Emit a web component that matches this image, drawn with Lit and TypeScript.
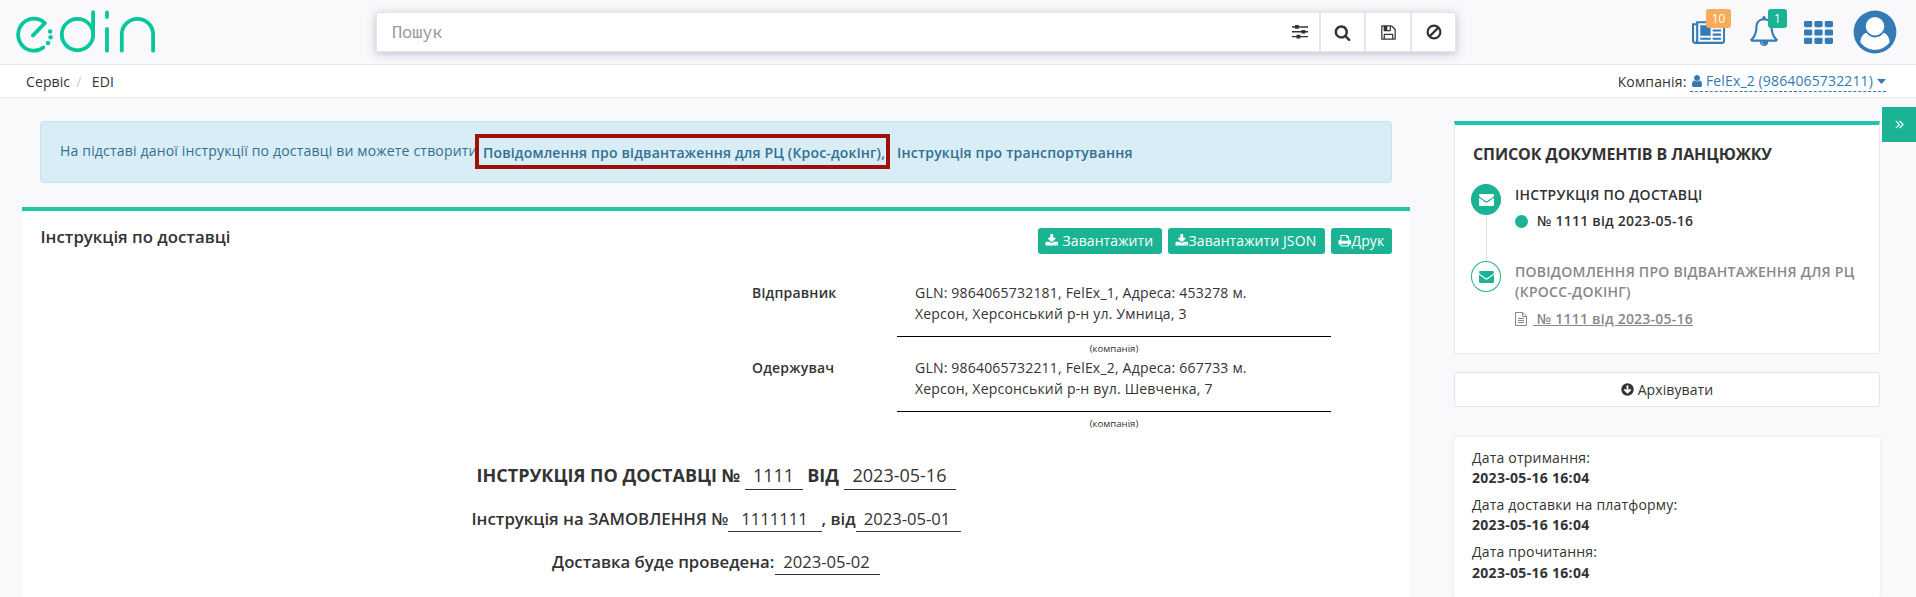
import { LitElement, html, css, svg } from "lit";
import { customElement } from "lit/decorators.js";

const P = {
  search: "M1216 832q0-185-131.5-316.5t-316.5-131.5-316.5 131.5-131.5 316.5 131.5 316.5 316.5 131.5 316.5-131.5 131.5-316.5zm512 832q0 52-38 90t-90 38q-54 0-90-38l-343-342q-179 124-399 124-143 0-273.5-55.5t-225-150-150-225-55.5-273.5 55.5-273.5 150-225 225-150 273.5-55.5 273.5 55.5 225 150 150 225 55.5 273.5q0 220-124 399l343 343q37 37 37 90z",
  bell: "M912 1696q0-16-16-16-59 0-101.5-42.5t-42.5-101.5q0-16-16-16t-16 16q0 73 51.5 124.5t124.5 51.5q16 0 16-16zm-666-288h1300q-266-300-266-832 0-51-24-105t-69-103-121.5-80.5-169.5-31.5-169.5 31.5-121.5 80.5-69 103-24 105q0 532-266 832zm1482 0q0 52-38 90t-90 38h-448q0 106-75 181t-181 75-181-75-75-181h-448q-52 0-90-38t-38-90q50-42 91-88t85-119.5 74.5-158.5 50-206 19.5-260q0-152 117-282.5t307-158.5q-8-19-8-39 0-40 28-68t68-28 68 28 28 68q0 20-8 39 190 28 307 158.5t117 282.5q0 139 19.5 260t50 206 74.5 158.5 85 119.5 91 88z",
  news: "M1024 1024h-384v-384h384v384zm128 256v128h-640v-128h640zm0-768v640h-640v-640h640zm640 768v128h-512v-128h512zm0-256v128h-512v-128h512zm0-256v128h-512v-128h512zm0-256v128h-512v-128h512zm-1536 960v-960h-128v960q0 26 19 45t45 19 45-19 19-45zm1664 0v-1088h-1536v1088q0 33-11 64h1483q26 0 45-19t19-45zm128-1216v1216q0 80-56 136t-136 56h-1664q-80 0-136-56t-56-136v-1088h256v-128h1792z",
  download: "M1344 1344q0-26-19-45t-45-19-45 19-19 45 19 45 45 19 45-19 19-45zm256 0q0-26-19-45t-45-19-45 19-19 45 19 45 45 19 45-19 19-45zm128-224v320q0 40-28 68t-68 28h-1472q-40 0-68-28t-28-68v-320q0-40 28-68t68-28h465l135 136q58 56 136 56t136-56l136-136h464q40 0 68 28t28 68zm-325-569q17 41-14 70l-448 448q-18 19-45 19t-45-19l-448-448q-31-29-14-70 17-39 59-39h256v-448q0-26 19-45t45-19h256q26 0 45 19t19 45v448h256q42 0 59 39z",
  print: "M448 1536h896v-256h-896v256zm0-640h896v-384h-160q-40 0-68-28t-28-68v-160h-640v640zm1152 64q0-26-19-45t-45-19-45 19-19 45 19 45 45 19 45-19 19-45zm128 0v416q0 13-9.5 22.5t-22.5 9.5h-224v160q0 40-28 68t-68 28h-960q-40 0-68-28t-28-68v-160h-224q-13 0-22.5-9.5t-9.5-22.5v-416q0-79 56.5-135.5t135.5-56.5h64v-544q0-40 28-68t68-28h672q40 0 88 20t76 48l152 152q28 28 48 76t20 88v256h64q79 0 135.5 56.5t56.5 135.5z",
  user: "M1536 1399q0 109-62.5 187t-150.5 78h-854q-88 0-150.5-78t-62.5-187q0-85 8.5-160.5t31.5-152 58.5-131 94-89 134.5-34.5q131 128 313 128t313-128q76 0 134.5 34.5t94 89 58.5 131 31.5 152 8.5 160.5zm-256-887q0 159-112.5 271.5t-271.5 112.5-271.5-112.5-112.5-271.5 112.5-271.5 271.5-112.5 271.5 112.5 112.5 271.5z",
  floppy: "M512 1536h768v-384h-768v384zm896 0h128v-896q0-14-10-38.5t-20-34.5l-281-281q-10-10-34-20t-39-10v416q0 40-28 68t-68 28h-576q-40 0-68-28t-28-68v-416h-128v1280h128v-416q0-40 28-68t68-28h832q40 0 68 28t28 68v416zm-384-928v-320q0-13-9.5-22.5t-22.5-9.5h-192q-13 0-22.5 9.5t-9.5 22.5v320q0 13 9.5 22.5t22.5 9.5h192q13 0 22.5-9.5t9.5-22.5zm640 32v928q0 40-28 68t-68 28h-1344q-40 0-68-28t-28-68v-1344q0-40 28-68t68-28h928q40 0 88 20t76 48l280 280q28 28 48 76t20 88z",
};

const fa = (d: string, size: number, w = 1792) =>
  html`<svg width=${(size * w) / 1792} height=${size} viewBox="0 0 ${w} 1792" fill="currentColor"><path d=${d} /></svg>`;

const logo = html`<svg width="140" height="46" viewBox="0 0 140 46" fill="none" stroke="#06c79c" stroke-width="3.8" stroke-linecap="round" stroke-linejoin="round">
  <path d="M17 27.400 28.800 15.200A15.700 16 0 1 0 27.300 39.500" />
  <circle cx="61.5" cy="26.600" r="15.7" />
  <path d="M77.100 4.200V26.600M91 4.400V9M91 20.800V42.700M105.800 42.700V26.500a15.600 15.600 0 0 1 31.300 0V42.700" />
  <g fill="#06c79c" stroke="none"><circle cx="34.100" cy="23.500" r="2.200" /><circle cx="34.600" cy="29.300" r="2.200" /><circle cx="32" cy="35" r="2.200" /></g>
</svg>`;

const sliders = html`<svg width="16" height="14" viewBox="0 0 16 14" fill="currentColor">
  <path d="M0 1.300h16v1.400H0zM0 6.100h16v1.400H0zM0 10.900h16v1.400H0z" />
  <path d="M3 0h3.800v3.700H3zM9.500 4.900h3.800v3.700H9.500zM4.500 9.800h3.800v3.700H4.500z" />
</svg>`;

const ban = html`<svg width="16" height="16" viewBox="0 0 16 16" fill="none" stroke="currentColor" stroke-width="2.200">
  <circle cx="8" cy="8" r="6.400" /><path d="M3.600 12.400 12.400 3.600" />
</svg>`;

const grid = html`<svg width="29" height="23" viewBox="0 0 29 23" fill="currentColor">
  ${[0, 8.4, 16.8].map((y) => [0, 10.4, 20.8].map((x) => svg`<rect x=${x} y=${y} width="8.2" height="6.200" rx="1.400" />`))}
</svg>`;

const avatar = html`<svg width="44" height="44" viewBox="0 0 44 44">
  <circle cx="22" cy="22" r="21.400" fill="#337ab7" />
  <path d="M13.300 22.800Q17 27.400 22 27.400Q27 27.400 30.700 22.800C34 23.500 36.600 28 36.600 32.500C33 37 28 39.800 22 39.800S11 37 7.400 32.500C7.400 28 10 23.500 13.300 22.800z" fill="#fff" />
  <circle cx="22" cy="16.300" r="9.200" fill="#fff" />
</svg>`;

const caret = html`<svg width="9" height="5" viewBox="0 0 9 5" fill="currentColor"><path d="M0 0h9L4.500 5z" /></svg>`;

const mail = html`<svg width="15" height="12" viewBox="0 0 15 12" fill="currentColor">
  <path d="M1.300 0h12.400Q15 0 15 1.300 15 2.400 13.500 3.400L8.600 6.800Q7.500 7.500 6.400 6.800L1.500 3.400Q0 2.400 0 1.300 0 0 1.300 0z" />
  <path d="M0 3.700 6 7.900Q7.500 8.900 9 7.900L15 3.700V10.700Q15 12 13.700 12H1.300Q0 12 0 10.700z" />
</svg>`;

const doc = html`<svg width="12" height="14" viewBox="0 0 12 14" fill="none" stroke="currentColor">
  <path d="M.5.5h7.200l3.800 3.800v9.200H.5zM7.500.5v4h4M3 6.500h6M3 8.500h6M3 10.500h6" />
</svg>`;

const archive = html`<svg width="13" height="13" viewBox="0 0 13 13">
  <circle cx="6.500" cy="6.500" r="6.200" fill="currentColor" />
  <path d="M6.500 2.600v6.600M3.300 6.300l3.200 3.200 3.200-3.200" fill="none" stroke="#fff" stroke-width="1.900" />
</svg>`;

const chevrons = html`<svg width="9" height="9" viewBox="0 0 9 9" fill="none" stroke="currentColor" stroke-width="1.200">
  <path d="M.8.8l3.600 3.700L.8 8.200M4.500.8l3.600 3.700-3.600 3.700" />
</svg>`;

const parties = [
  { role: "Відправник", lines: ["GLN: 9864065732181, FelEx_1, Адреса: 453278 м.", "Херсон, Херсонський р-н ул. Умница, 3"] },
  { role: "Одержувач", lines: ["GLN: 9864065732211, FelEx_2, Адреса: 667733 м.", "Херсон, Херсонський р-н вул. Шевченка, 7"] },
];

const dates = [
  ["Дата отримання:", "2023-05-16 16:04"],
  ["Дата доставки на платформу:", "2023-05-16 16:04"],
  ["Дата прочитання:", "2023-05-16 16:04"],
];

@customElement("app-root")
export class AppRoot extends LitElement {
  static styles = css`
    :host { display: block; height: 597px; overflow: hidden; background: #f9f9fb; color: #333;
      font: 14px/20px "Open Sans", "Noto Sans", sans-serif; }
    * { box-sizing: border-box; }
    svg { display: block; flex: none; }
    .top { height: 65px; border-bottom: 1px solid #e4e7ec; display: flex; align-items: flex-start; }
    .logo { margin: 8px 0 0 16px; width: 360px; }
    .search { margin-top: 12px; width: 1080px; height: 40px; display: flex; background: #fff; border: 1px solid #e5e6e9;
      box-shadow: 0 2px 9px rgba(60, 65, 110, .3); }
    .field { flex: 1; display: flex; align-items: center; justify-content: space-between; padding: 0 11px 0 15px; }
    .hint { font: 17px/36px "Noto Sans Mono", "DejaVu Sans Mono", monospace; color: #999; letter-spacing: -.1px; }
    .tool { width: 45.500px; border-left: 2px solid #e5e6e7; display: flex; align-items: center; justify-content: center; padding-left: 1px; }
    .nav { flex: 1; display: flex; color: #337ab7; height: 64px; }
    .news { margin: 17px 0 0 236px; width: 34px; position: relative; }
    .bell { margin: 16px 0 0 23px; width: 29px; position: relative; }
    .grid { margin: 21px 0 0 26px; }
    .avatar { margin: 10px 0 0 20px; }
    .badge { position: absolute; height: 19px; border-radius: 3px; color: #fff; font-size: 12px; line-height: 19px; text-align: center; }
    .orange { background: #f8ac59; left: 14px; top: -8px; width: 25px; }
    .green { background: #1ab394; left: 19px; top: -7px; width: 19px; }
    .crumbs { height: 33px; border-bottom: 1px solid #e4e7ec; background: #fff; padding: 0 30px 0 26px; display: flex; justify-content: space-between; line-height: 33px; letter-spacing: .1px; }
    .sep { color: #ccc; padding: 0 10.500px 0 6px; letter-spacing: 0; }
    .company { display: flex; align-items: center; gap: 3.500px; letter-spacing: .14px; }
    .pick { display: flex; align-items: center; gap: 4px; color: #337ab7; line-height: 20px; height: 21px; margin-top: 1px; border-bottom: 1px dashed #337ab7; }
    .body { display: flex; align-items: flex-start; }
    .main { width: 1388px; margin: 23px 0 0 22px; }
    .alert { margin: 0 18px; height: 62px; border: 1px solid #bce8f1; border-radius: 4px; background: #d9edf7; color: #31708f;
      padding: 13px 19px; display: flex; }
    .lead { line-height: 31px; width: 415px; white-space: nowrap; letter-spacing: .18px; flex: none; }
    .link { font-weight: 600; line-height: 36px; white-space: nowrap; height: 35px; letter-spacing: .2px; }
    .marked { width: 415px; border: 4px solid #9c120b; margin: -1px 7px 0 0; padding-left: 4px; line-height: 29px; letter-spacing: .17px; flex: none; }
    .card { margin-top: 24px; height: 420px; border-top: 4px solid #1fc5a6; background: #fff; }
    .head { display: flex; justify-content: space-between; padding: 17px 18px 0 18.500px; height: 61px; }
    .title { font-size: 16.800px; font-weight: 600; line-height: 18px; }
    .btns { display: flex; gap: 6px; }
    .btn { height: 26px; border-radius: 3px; background: #1ab394; color: #fff; display: flex; align-items: center; padding-left: 7px; white-space: nowrap; letter-spacing: .1px; }
    .b1 { width: 124px; gap: 4px; } .b2 { width: 157px; } .b3 { width: 61px; }
    .party { display: grid; grid-template-columns: 145px 434px; padding-left: 730px; height: 75px; line-height: 21px; padding-top: 10px; }
    .role { font-weight: 600; letter-spacing: .2px; }
    .who { height: 55px; border-bottom: 1px solid #000; padding-left: 18px; white-space: nowrap; letter-spacing: .2px; }
    .note { grid-column: 2; text-align: center; font-size: 9.600px; line-height: 22px; height: 19px; margin-top: 1px; }
    .row { display: flex; align-items: flex-start; white-space: pre; font-weight: 600; }
    .r1 { font-size: 18px; font-weight: 700; padding-left: 454.500px; margin-top: 40px; height: 43px; line-height: 27px; }
    .r2 { font-size: 16.800px; padding-left: 449.500px; height: 43px; line-height: 27px; }
    .r3 { font-size: 16.750px; padding-left: 530px; line-height: 27px; }
    .val { font-weight: 400; border-bottom: 1px solid #333; text-align: center; height: 28px; }
    .r2 .val, .r3 .val { font-size: 16.600px; height: 27px; }
    .r3 .val, .r2 .val:last-child { padding-right: 2px; }
    .side { width: 426px; margin: 23px 0 0 44px; }
    .chain { height: 233px; background: #fff; border: 1px solid #e7eaec; border-top: 4px solid #1fc5a6; padding-left: 16px; }
    .cap { font-size: 16px; font-weight: 700; line-height: 22px; padding: 18px 0 0 2px; height: 59px; letter-spacing: -.09px; }
    .step { display: flex; gap: 14px; font-weight: 600; height: 77px; letter-spacing: .25px; white-space: nowrap; }
    .text { padding-top: 1px; }
    .rail { width: 30px; display: flex; flex-direction: column; align-items: center; flex: none; }
    .dot { width: 30px; height: 31px; border-radius: 50%; border: 1px solid #1ab394; color: #1ab394; display: flex; align-items: center; justify-content: center; flex: none; }
    .on { background: #1ab394; color: #fff; }
    .line { width: 1px; flex: 1; background: #e0e0e0; }
    .doc { display: flex; align-items: center; height: 20px; margin-top: 6px; white-space: pre; letter-spacing: .23px; }
    .muted .doc { margin-top: 7px; }
    .mark { width: 13px; height: 13px; border-radius: 50%; background: #1ab394; margin-right: 9px; }
    .muted { color: #888; }
    .ref { margin-left: 6px; text-decoration: underline; }
    .arch { margin-top: 18px; height: 35px; background: #fff; border: 1px solid #e4e4ee; border-radius: 3px; display: flex; align-items: center; justify-content: center; gap: 4px; letter-spacing: .1px; }
    .dates { margin-top: 30px; height: 161px; background: #fff; border-radius: 4px; box-shadow: 0 0 4px rgba(0, 0, 0, .08); padding: 11px 18px; letter-spacing: .2px; }
    .pair { height: 47px; }
    .pair b { display: block; font-weight: 700; letter-spacing: .3px; }
    .pair:last-child b { padding-top: 1px; }
    .toggle { width: 34px; height: 35px; margin: 9px 0 0 2px; background: #1ab394; color: #fff; display: flex; align-items: center; justify-content: center; }
  `;

  render() {
    return html`
      <header class="top">
        <div class="logo">${logo}</div>
        <div class="search">
          <div class="field"><span class="hint">Пошук</span>${sliders}</div>
          <div class="tool">${fa(P.search, 17)}</div>
          <div class="tool">${fa(P.floppy, 17)}</div>
          <div class="tool">${ban}</div>
        </div>
        <nav class="nav">
          <div class="news">${fa(P.news, 29, 2048)}<span class="badge orange">10</span></div>
          <div class="bell">${fa(P.bell, 30)}<span class="badge green">1</span></div>
          <div class="grid">${grid}</div>
          <div class="avatar">${avatar}</div>
        </nav>
      </header>
      <div class="crumbs">
        <div>Сервіс<span class="sep">/</span>EDI</div>
        <div class="company">Компанія:<span class="pick">${fa(P.user, 14, 1536)}<span>FelEx_2 (9864065732211)</span>${caret}</span></div>
      </div>
      <div class="body">
        <main class="main">
          <div class="alert">
            <span class="lead">На підставі даної інструкції по доставці ви можете створити</span>
            <span class="link marked">Повідомлення про відвантаження для РЦ (Крос-докінг),</span>
            <span class="link">Інструкція про транспортування</span>
          </div>
          <section class="card">
            <div class="head">
              <div class="title">Інструкція по доставці</div>
              <div class="btns">
                <div class="btn b1">${fa(P.download, 13.5)}<span>Завантажити</span></div>
                <div class="btn b2">${fa(P.download, 13.5)}<span>Завантажити JSON</span></div>
                <div class="btn b3">${fa(P.print, 13.5)}<span>Друк</span></div>
              </div>
            </div>
            ${parties.map((p) => html`<div class="party">
              <div class="role">${p.role}</div>
              <div class="who">${p.lines[0]}<br />${p.lines[1]}</div>
              <div class="note">(компанія)</div>
            </div>`)}
            <div class="row r1"><span style="width:268px">ІНСТРУКЦІЯ ПО ДОСТАВЦІ №</span><span class="val" style="width:58px">1111</span><span style="width:41px"> ВІД</span><span class="val" style="width:112px">2023-05-16</span></div>
            <div class="row r2"><span style="width:256px">Інструкція на ЗАМОВЛЕННЯ №</span><span class="val" style="width:94px">1111111</span><span style="width:34px">, від</span><span class="val" style="width:105px">2023-05-01</span></div>
            <div class="row r3"><span style="width:223px">Доставка буде проведена:</span><span class="val" style="width:105px">2023-05-02</span></div>
          </section>
        </main>
        <aside class="side">
          <section class="chain">
            <div class="cap">СПИСОК ДОКУМЕНТІВ В ЛАНЦЮЖКУ</div>
            <div class="step">
              <div class="rail"><div class="dot on">${mail}</div><div class="line"></div></div>
              <div class="text"><div>ІНСТРУКЦІЯ ПО ДОСТАВЦІ</div><div class="doc"><span class="mark"></span>№ 1111 від 2023-05-16</div></div>
            </div>
            <div class="step muted">
              <div class="rail"><div class="dot">${mail}</div></div>
              <div class="text"><div>ПОВІДОМЛЕННЯ ПРО ВІДВАНТАЖЕННЯ ДЛЯ РЦ<br />(КРОСС-ДОКІНГ)</div><div class="doc">${doc}<span class="ref"> № 1111 від 2023-05-16</span></div></div>
            </div>
          </section>
          <div class="arch">${archive}Архівувати</div>
          <section class="dates">
            ${dates.map(([k, v]) => html`<div class="pair">${k}<b>${v}</b></div>`)}
          </section>
        </aside>
        <div class="toggle">${chevrons}</div>
      </div>
    `;
  }
}
